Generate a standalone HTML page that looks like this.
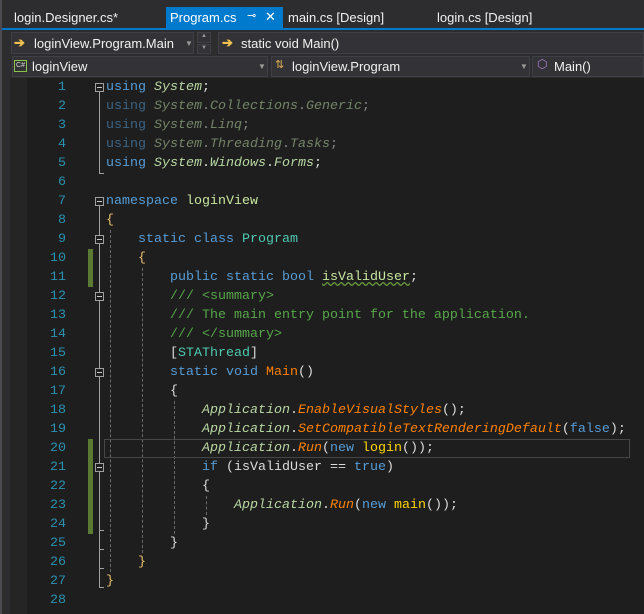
<!DOCTYPE html>
<html><head><meta charset="utf-8"><style>
*{margin:0;padding:0;box-sizing:border-box}
body{width:644px;height:614px;overflow:hidden;background:#1e1e1e;position:relative;font-family:"Liberation Sans",sans-serif;}
.a{position:absolute}
.ui{font-size:13px;color:#f1f1f1;white-space:nowrap}
.code{position:absolute;left:0;top:0;font-family:"Liberation Mono",monospace;font-size:13.33px;}
.ln{position:absolute;left:30px;width:36px;text-align:right;color:#2b91af;height:19px;line-height:19px}
.l{position:absolute;left:106px;height:19px;line-height:19px;white-space:pre;color:#dcdcdc}
.k{color:#569cd6}.t{color:#4ec9b0}.c{color:#57a64a}.m{color:#ff8000;font-style:italic}
.ap{color:#b8d7a3;font-style:italic}.y{color:#ffd700}.f{opacity:.55}.or{color:#ff8000}
.box{position:absolute;left:95px;width:9px;height:9px;border:1px solid #a0a0a0;background:#1e1e1e}
.box::after{content:"";position:absolute;left:1px;top:3px;width:5px;height:1px;background:#c8c8c8}
.vl{position:absolute;width:1px;background:#a0a0a0}
.dl{position:absolute;width:0;border-left:1px dashed #6a6a6a}
.gb{position:absolute;left:88px;width:5px;background:#5b7a32}
.nb{position:absolute;background:#333337;border:1px solid #3f3f46}
.dd{position:absolute;color:#999;font-size:8px}
</style></head><body>
<!-- tab bar -->
<div class="a" style="left:0;top:0;width:644px;height:30px;background:#2d2d30"></div>
<div class="a ui" style="left:14px;top:10px">login.Designer.cs*</div>
<div class="a" style="left:166px;top:7px;width:117px;height:22px;background:#007acc"></div>
<div class="a ui" style="left:170px;top:10px;color:#fff">Program.cs</div>
<div class="a ui" style="left:247px;top:9px;color:#fff;font-size:11px">⊸</div>
<div class="a ui" style="left:265px;top:9px;color:#fff;font-size:13px">✕</div>
<div class="a ui" style="left:288px;top:10px">main.cs [Design]</div>
<div class="a ui" style="left:437px;top:10px">login.cs [Design]</div>
<div class="a" style="left:0;top:28px;width:644px;height:2px;background:#007acc"></div>
<!-- nav bar 1 -->
<div class="a" style="left:0;top:30px;width:644px;height:48px;background:#2d2d30"></div>
<div class="nb" style="left:11px;top:32px;width:183px;height:22px"></div>
<div class="a ui" style="left:14px;top:35px;color:#f0c050;font-weight:bold">➔</div>
<div class="a ui" style="left:34px;top:36px">loginView.Program.Main</div>
<div class="dd" style="left:185px;top:39px">▼</div>
<div class="nb" style="left:197px;top:32px;width:14px;height:11px"></div>
<div class="nb" style="left:197px;top:44px;width:14px;height:10px"></div>
<div class="a ui" style="left:201px;top:33px;color:#999;font-size:6px">▲</div>
<div class="a ui" style="left:201px;top:45px;color:#999;font-size:6px">▼</div>
<div class="nb" style="left:218px;top:32px;width:426px;height:22px"></div>
<div class="a ui" style="left:222px;top:35px;color:#f0c050;font-weight:bold">➔</div>
<div class="a ui" style="left:241px;top:36px">static void Main()</div>
<!-- nav bar 2 -->
<div class="nb" style="left:12px;top:56px;width:256px;height:21px"></div>
<div class="a" style="left:14px;top:60px;width:13px;height:12px;border:1px solid #8bc34a;color:#ddd;font-size:7px;line-height:10px;text-align:center">C#</div>
<div class="a ui" style="left:32px;top:59px">loginView</div>
<div class="dd" style="left:258px;top:62px">▼</div>
<div class="nb" style="left:271px;top:56px;width:259px;height:21px"></div>
<div class="a ui" style="left:275px;top:58px;color:#e0b050;font-size:11px">⇅</div>
<div class="a ui" style="left:292px;top:59px">loginView.Program</div>
<div class="dd" style="left:520px;top:62px">▼</div>
<div class="nb" style="left:532px;top:56px;width:112px;height:21px"></div>
<div class="a ui" style="left:537px;top:57px;color:#b180d7;font-size:12px">⬡</div>
<div class="a ui" style="left:554px;top:59px">Main()</div>
<!-- left strip -->
<div class="a" style="left:0;top:78px;width:10px;height:536px;background:#2d2d30"></div>
<div class="a" style="left:10px;top:78px;width:17px;height:536px;background:#252526"></div>
<div class="a" style="left:0;top:0;width:2px;height:614px;background:#4a4a50"></div>

<div class="code">
<div class="ln" style="top:78px">1</div><div class="ln" style="top:97px">2</div><div class="ln" style="top:116px">3</div><div class="ln" style="top:135px">4</div><div class="ln" style="top:154px">5</div><div class="ln" style="top:173px">6</div><div class="ln" style="top:192px">7</div><div class="ln" style="top:211px">8</div><div class="ln" style="top:230px">9</div><div class="ln" style="top:249px">10</div><div class="ln" style="top:268px">11</div><div class="ln" style="top:287px">12</div><div class="ln" style="top:306px">13</div><div class="ln" style="top:325px">14</div><div class="ln" style="top:344px">15</div><div class="ln" style="top:363px">16</div><div class="ln" style="top:382px">17</div><div class="ln" style="top:401px">18</div><div class="ln" style="top:420px">19</div><div class="ln" style="top:439px">20</div><div class="ln" style="top:458px">21</div><div class="ln" style="top:477px">22</div><div class="ln" style="top:496px">23</div><div class="ln" style="top:515px">24</div><div class="ln" style="top:534px">25</div><div class="ln" style="top:553px">26</div><div class="ln" style="top:572px">27</div><div class="ln" style="top:591px">28</div>

<div class="gb" style="top:249px;height:38px"></div>
<div class="gb" style="top:439px;height:95px"></div>

<div class="vl" style="left:99px;top:92px;height:81px"></div>
<div class="vl" style="left:99px;top:173px;height:1px;width:5px"></div>
<div class="vl" style="left:99px;top:206px;height:381px"></div>
<div class="vl" style="left:99px;top:587px;height:1px;width:5px"></div>
<div class="vl" style="left:99px;top:568px;height:1px;width:5px"></div>
<div class="vl" style="left:99px;top:549px;height:1px;width:5px"></div>
<div class="vl" style="left:99px;top:530px;height:1px;width:5px"></div>
<div class="box" style="top:83px"></div>
<div class="box" style="top:197px"></div>
<div class="box" style="top:235px"></div>
<div class="box" style="top:292px"></div>
<div class="box" style="top:368px"></div>
<div class="box" style="top:463px"></div>
<div class="dl" style="left:110px;top:230px;height:342px"></div>
<div class="dl" style="left:142px;top:268px;height:285px"></div>
<div class="dl" style="left:174px;top:401px;height:133px"></div>
<div class="dl" style="left:206px;top:496px;height:19px"></div>

<div class="a" style="left:104px;top:439px;width:526px;height:19px;border:1px solid #464646"></div>

<div class="l" style="top:78px"><span class="k">using</span> <span class="ap">System</span>;</div>
<div class="l f" style="top:97px"><span class="k">using</span> <span class="ap">System</span>.<span class="ap">Collections</span>.<span class="ap">Generic</span>;</div>
<div class="l f" style="top:116px"><span class="k">using</span> <span class="ap">System</span>.<span class="ap">Linq</span>;</div>
<div class="l f" style="top:135px"><span class="k">using</span> <span class="ap">System</span>.<span class="ap">Threading</span>.<span class="ap">Tasks</span>;</div>
<div class="l" style="top:154px"><span class="k">using</span> <span class="ap">System</span>.<span class="ap">Windows</span>.<span class="ap">Forms</span>;</div>
<div class="l" style="top:192px"><span class="k">namespace</span> <span style="color:#c8e6a0">loginView</span></div>
<div class="l" style="top:211px"><span style="color:#e8c070">{</span></div>
<div class="l" style="top:230px">    <span class="k">static</span> <span class="k">class</span> <span class="t">Program</span></div>
<div class="l" style="top:249px">    <span style="color:#e8c070">{</span></div>
<div class="l" style="top:268px">        <span class="k">public</span> <span class="k">static</span> <span class="k">bool</span> <span style="color:#c8e6a0;text-decoration:underline wavy #6a9a3a">isValidUser</span>;</div>
<div class="l c" style="top:287px">        /// &lt;summary&gt;</div>
<div class="l c" style="top:306px">        /// The main entry point for the application.</div>
<div class="l c" style="top:325px">        /// &lt;/summary&gt;</div>
<div class="l" style="top:344px">        [<span class="t">STAThread</span>]</div>
<div class="l" style="top:363px">        <span class="k">static</span> <span class="k">void</span> <span class="or">Main</span>()</div>
<div class="l" style="top:382px">        {</div>
<div class="l" style="top:401px">            <span class="ap">Application</span>.<span class="m">EnableVisualStyles</span>();</div>
<div class="l" style="top:420px">            <span class="ap">Application</span>.<span class="m">SetCompatibleTextRenderingDefault</span>(<span class="k">false</span>);</div>
<div class="l" style="top:439px">            <span class="ap">Application</span>.<span class="m">Run</span>(<span class="k">new</span> <span class="y">login</span>());</div>
<div class="l" style="top:458px">            <span class="k">if</span> (isValidUser == <span class="k">true</span>)</div>
<div class="l" style="top:477px">            {</div>
<div class="l" style="top:496px">                <span class="ap">Application</span>.<span class="m">Run</span>(<span class="k">new</span> <span class="y">main</span>());</div>
<div class="l" style="top:515px">            }</div>
<div class="l" style="top:534px">        }</div>
<div class="l" style="top:553px">    <span style="color:#e8c070">}</span></div>
<div class="l" style="top:572px"><span style="color:#e8c070">}</span></div>
</div>
</body></html>
